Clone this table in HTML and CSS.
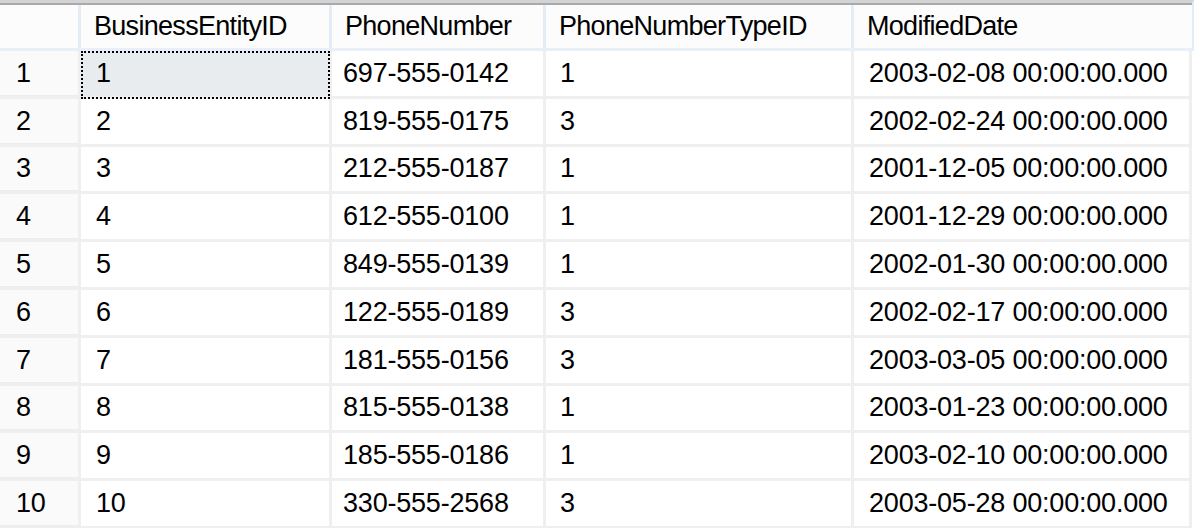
FILE: index.html
```html
<!DOCTYPE html>
<html lang="en">
<head>
<meta charset="utf-8">
<title>Results</title>
<link rel="stylesheet" href="styles.css">
</head>
<body>
<div class="results">
  <div class="grid-head">
    <div class="hcell corner"></div>
    <div class="hcell">BusinessEntityID</div>
    <div class="hcell">PhoneNumber</div>
    <div class="hcell">PhoneNumberTypeID</div>
    <div class="hcell last">ModifiedDate</div>
  </div>
  <div class="grid-body">
    <div class="rh">1</div><div class="cell c1 selected">1</div><div class="cell c2">697-555-0142</div><div class="cell c3">1</div><div class="cell c4">2003-02-08 00:00:00.000</div>
    <div class="rh">2</div><div class="cell c1">2</div><div class="cell c2">819-555-0175</div><div class="cell c3">3</div><div class="cell c4">2002-02-24 00:00:00.000</div>
    <div class="rh">3</div><div class="cell c1">3</div><div class="cell c2">212-555-0187</div><div class="cell c3">1</div><div class="cell c4">2001-12-05 00:00:00.000</div>
    <div class="rh">4</div><div class="cell c1">4</div><div class="cell c2">612-555-0100</div><div class="cell c3">1</div><div class="cell c4">2001-12-29 00:00:00.000</div>
    <div class="rh">5</div><div class="cell c1">5</div><div class="cell c2">849-555-0139</div><div class="cell c3">1</div><div class="cell c4">2002-01-30 00:00:00.000</div>
    <div class="rh">6</div><div class="cell c1">6</div><div class="cell c2">122-555-0189</div><div class="cell c3">3</div><div class="cell c4">2002-02-17 00:00:00.000</div>
    <div class="rh">7</div><div class="cell c1">7</div><div class="cell c2">181-555-0156</div><div class="cell c3">3</div><div class="cell c4">2003-03-05 00:00:00.000</div>
    <div class="rh">8</div><div class="cell c1">8</div><div class="cell c2">815-555-0138</div><div class="cell c3">1</div><div class="cell c4">2003-01-23 00:00:00.000</div>
    <div class="rh">9</div><div class="cell c1">9</div><div class="cell c2">185-555-0186</div><div class="cell c3">1</div><div class="cell c4">2003-02-10 00:00:00.000</div>
    <div class="rh">10</div><div class="cell c1">10</div><div class="cell c2">330-555-2568</div><div class="cell c3">3</div><div class="cell c4">2003-05-28 00:00:00.000</div>
  </div>
</div>
</body>
</html>
```

FILE: styles.css
```css
* { box-sizing: border-box; }

html, body {
  margin: 0;
  padding: 0;
  background: #ffffff;
}

body {
  width: 1196px;
  height: 528px;
  overflow: hidden;
  font-family: "Liberation Sans", Arial, sans-serif;
  font-size: 27px;
  letter-spacing: -0.2px;
  color: #000;
}

.results {
  width: 1196px;
}

.grid-head {
  display: grid;
  grid-template-columns: 78px 248px 211px 305px 338px;
  column-gap: 3px;
  width: 1194px;
  height: 51px;
  background: #e4ecf6;
  border-top: 3px solid #d3d3d3;
  border-right: 2px solid #e4ecf6;
  border-bottom: 3px solid #e8eff8;
  box-shadow: inset 0 2px 0 #a9a9a9;
  padding-top: 2px;
}

.hcell {
  background: #fcfcfc;
  display: flex;
  align-items: center;
  padding-left: 13px;
  padding-bottom: 1px;
  white-space: nowrap;
  letter-spacing: -0.7px;
}

.grid-body {
  display: grid;
  grid-template-columns: 78px 248px 211px 305px 335px;
  grid-auto-rows: 44.8px;
  gap: 3px;
  width: 1192px;
  background: #efefef;
  padding: 0 3px 3px 0;
}

.rh {
  background: #fafafa;
  display: flex;
  align-items: center;
  padding-left: 16px;
  box-shadow: inset 0 -1px 0 #e9eef5;
}

.cell {
  background: #ffffff;
  display: flex;
  align-items: center;
  padding-left: 15px;
  white-space: nowrap;
}

.c2 { padding-left: 11px; }
.c3 { padding-left: 14px; }
.c4 { padding-left: 15px; }

.selected {
  position: relative;
  background: #e9ecef;
}

.selected::after {
  content: "";
  position: absolute;
  left: 0;
  top: 0;
  right: -1px;
  bottom: -3px;
  border: 2px dotted #000;
}
```
